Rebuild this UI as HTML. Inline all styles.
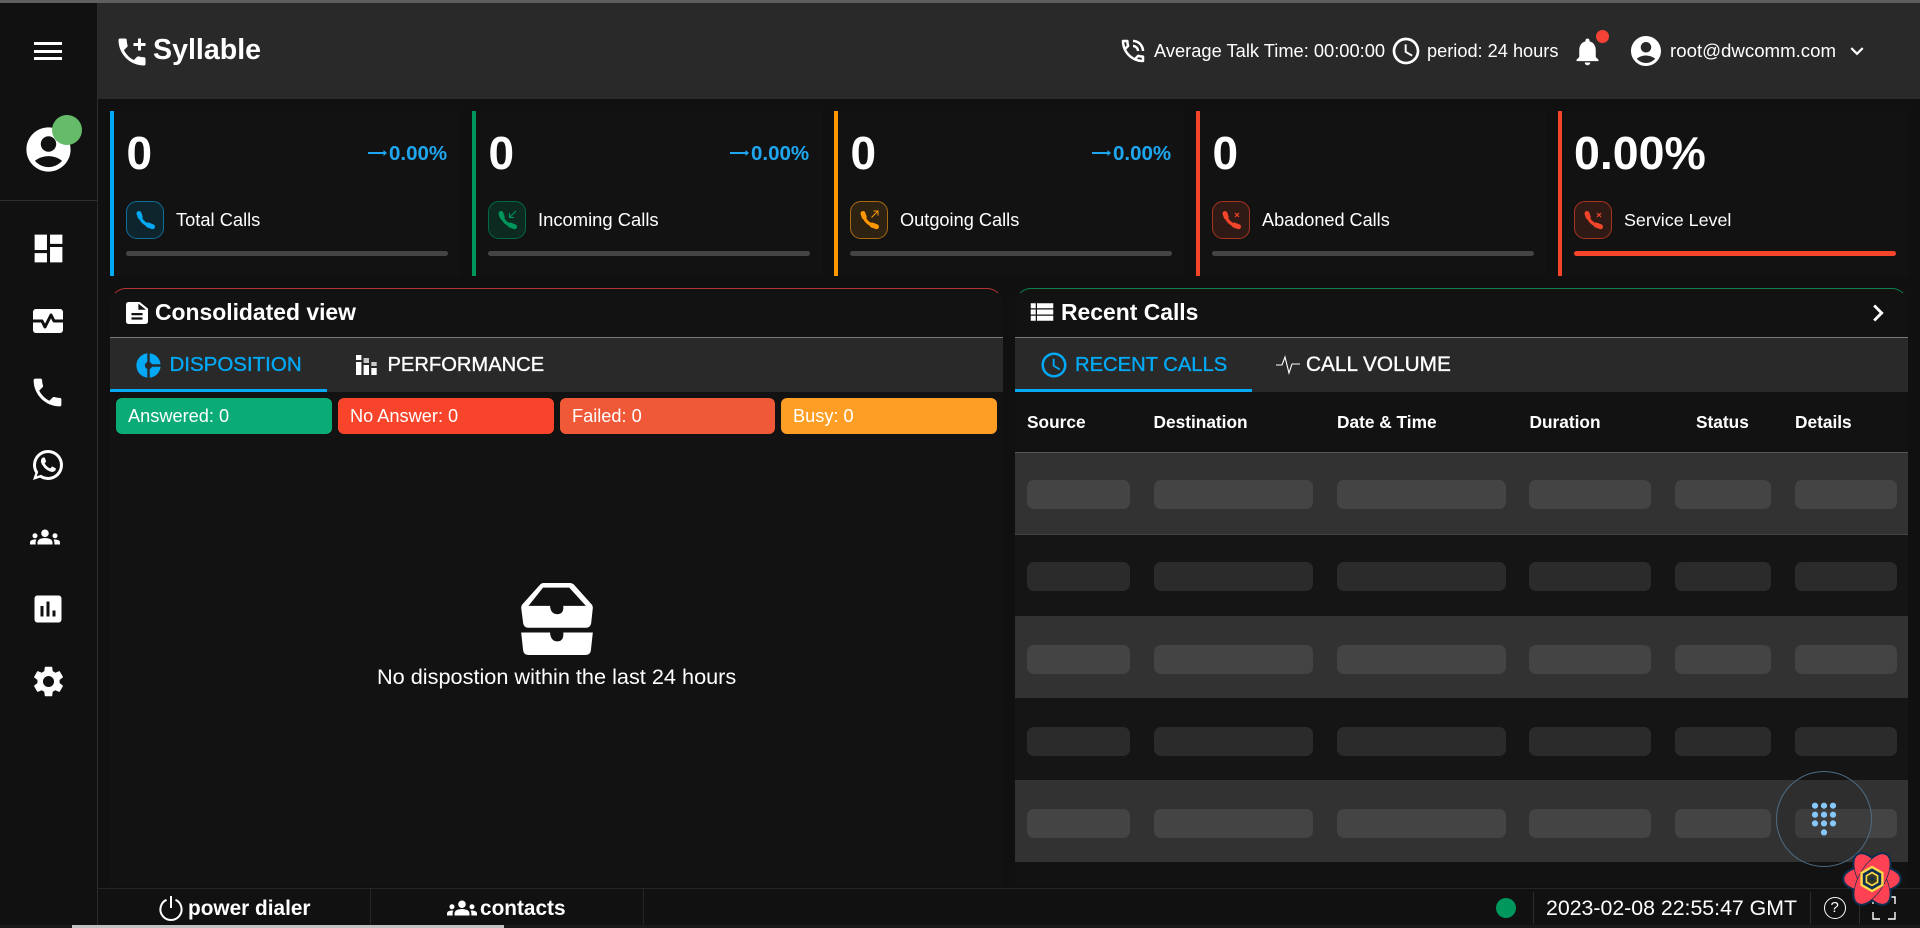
<!DOCTYPE html>
<html lang="en">
<head>
<meta charset="utf-8">
<title>Syllable</title>
<style>
html,body{margin:0;padding:0;width:1920px;height:928px;overflow:hidden;background:#111;}
body{position:relative;font-family:"Liberation Sans",Arial,sans-serif;color:#fff;}
.a{position:absolute;display:block;}
.t{position:absolute;white-space:nowrap;display:block;}
.m{-webkit-text-stroke:.35px currentColor;}
svg{position:absolute;display:block;overflow:visible;}
.w{fill:#fff;}
.b{font-weight:700;}
.card{position:absolute;top:111px;width:350px;height:165px;background:#121212;}
.skel{position:absolute;height:29px;border-radius:7px;}
.row{position:absolute;left:1015px;width:893px;height:82px;}
.chip{position:absolute;top:398px;height:36px;border-radius:6px;line-height:36px;font-size:18.2px;padding-left:12px;box-sizing:border-box;}
.ib{position:absolute;top:201px;width:38px;height:38px;border-radius:11px;box-sizing:border-box;border:1px solid;}
.h1{fill:none;stroke-width:3.2;}
.h2{fill:none;stroke-width:5;stroke-linecap:round;}
</style>
</head>
<body>
<div class="a" style="left:0;top:0;width:1920px;height:3px;background:#5e5e5e"></div>

<!-- main bg -->
<div class="a" style="left:98px;top:99px;width:1822px;height:790px;background:#101010"></div>

<!-- sidebar -->
<div class="a" style="left:0;top:3px;width:97px;height:925px;background:#111"></div>
<div class="a" style="left:97px;top:3px;width:1px;height:923px;background:#2b2b2b"></div>
<div class="a" style="left:34px;top:42px;width:28px;height:3px;background:#fff"></div>
<div class="a" style="left:34px;top:49.5px;width:28px;height:3px;background:#fff"></div>
<div class="a" style="left:34px;top:57px;width:28px;height:3px;background:#fff"></div>
<svg style="left:22px;top:123px" width="53" height="53" viewBox="0 0 24 24"><path class="w" d="M12 2C6.48 2 2 6.48 2 12s4.48 10 10 10 10-4.48 10-10S17.52 2 12 2zm0 4c1.93 0 3.5 1.57 3.5 3.5S13.93 13 12 13s-3.500-1.570-3.500-3.500S10.070 6 12 6zm0 14c-2.030 0-4.430-.82-6.140-2.880C7.550 15.800 9.680 15 12 15s4.450.8 6.140 2.120C16.430 19.180 14.030 20 12 20z"/></svg>
<div class="a" style="left:52px;top:115px;width:30px;height:30px;border-radius:50%;background:#66bb6a"></div>
<div class="a" style="left:0;top:200px;width:97px;height:1px;background:#2e2e2e"></div>
<svg style="left:29.500px;top:230px" width="37" height="37" viewBox="0 0 24 24"><path class="w" d="M3 13h8V3H3v10zm0 8h8v-6H3v6zm10 0h8V11h-8v10zm0-18v6h8V3h-8z"/></svg>
<svg style="left:30px;top:303px" width="36" height="36" viewBox="0 0 24 24"><path class="w" d="M20 4H4c-1.100 0-2 .9-2 2v5h6c.38 0 .72.21.89.55L10 13.760l3.110-6.210c.34-.68 1.450-.68 1.790 0L16.620 11H22V6c0-1.100-.9-2-2-2z"/><path class="w" d="M14 10.240l-3.110 6.210c-.17.34-.51.55-.89.55s-.72-.21-.89-.55L7.380 13H2v5c0 1.100.9 2 2 2h16c1.100 0 2-.9 2-2v-5h-6c-.38 0-.72-.21-.89-.55L14 10.240z"/></svg>
<svg style="left:29px;top:374px" width="37" height="37" viewBox="0 0 24 24"><path class="w" d="M6.620 10.790c1.440 2.830 3.760 5.140 6.590 6.590l2.200-2.200c.27-.27.67-.36 1.020-.24 1.120.37 2.330.57 3.570.57.55 0 1 .45 1 1V20c0 .55-.45 1-1 1-9.390 0-17-7.610-17-17 0-.55.45-1 1-1h3.500c.55 0 1 .45 1 1 0 1.250.2 2.450.57 3.570.11.35.03.74-.25 1.020l-2.200 2.200z"/></svg>
<svg style="left:30px;top:447px" width="36" height="36" viewBox="0 0 24 24"><path class="w" d="M16.750 13.960c.25.13.41.2.46.3.06.11.04.61-.21 1.180-.2.56-1.240 1.100-1.700 1.120-.46.02-.47.36-2.960-.73-2.490-1.090-3.990-3.750-4.110-3.920-.12-.17-.96-1.380-.92-2.610.05-1.220.69-1.800.95-2.040.24-.26.51-.29.68-.26h.47c.15 0 .36-.06.55.45l.69 1.870c.06.13.1.28.01.44l-.27.41-.39.42c-.12.12-.26.25-.12.5.12.26.62 1.090 1.320 1.780.91.88 1.710 1.170 1.950 1.300.24.14.39.12.54-.04l.81-.94c.19-.25.35-.19.58-.11l1.670.88M12 2a10 10 0 0 1 10 10 10 10 0 0 1-10 10c-1.970 0-3.800-.57-5.350-1.550L2 22l1.550-4.650A9.969 9.969 0 0 1 2 12 10 10 0 0 1 12 2m0 2a8 8 0 0 0-8 8c0 1.720.54 3.310 1.460 4.610L4.500 19.500l2.890-.96A7.950 7.950 0 0 0 12 20a8 8 0 0 0 8-8 8 8 0 0 0-8-8z"/></svg>
<svg style="left:30px;top:522px" width="30" height="30" viewBox="0 0 24 24"><path class="w" d="M12 12.750c1.630 0 3.070.39 4.240.9 1.080.48 1.760 1.560 1.760 2.730V18H6v-1.610c0-1.180.68-2.260 1.760-2.730 1.170-.52 2.610-.91 4.240-.91zM4 13c1.100 0 2-.9 2-2s-.9-2-2-2-2 .9-2 2 .9 2 2 2zm1.130 1.100c-.37-.06-.74-.1-1.130-.1-.99 0-1.930.21-2.780.58C.48 14.900 0 15.620 0 16.430V18h4.500v-1.610c0-.83.23-1.610.63-2.290zM20 13c1.100 0 2-.9 2-2s-.9-2-2-2-2 .9-2 2 .9 2 2 2zm4 3.430c0-.81-.48-1.530-1.220-1.850-.85-.37-1.790-.58-2.780-.58-.39 0-.76.04-1.130.1.4.68.63 1.460.63 2.290V18H24v-1.570zM12 6c1.660 0 3 1.340 3 3s-1.340 3-3 3-3-1.340-3-3 1.340-3 3-3z"/></svg>
<svg style="left:29.500px;top:591px" width="36" height="36" viewBox="0 0 24 24"><path class="w" d="M19 3H5c-1.100 0-2 .9-2 2v14c0 1.100.9 2 2 2h14c1.100 0 2-.9 2-2V5c0-1.100-.9-2-2-2zM9 17H7v-7h2v7zm4 0h-2V7h2v10zm4 0h-2v-4h2v4z"/></svg>
<svg style="left:29.500px;top:662.500px" width="37" height="37" viewBox="0 0 24 24"><path class="w" d="M19.140 12.940c.04-.3.06-.61.06-.94 0-.32-.02-.64-.07-.94l2.030-1.580c.18-.14.23-.41.12-.61l-1.920-3.320c-.12-.22-.37-.29-.59-.22l-2.390.96c-.5-.38-1.030-.7-1.620-.94l-.36-2.540c-.04-.24-.24-.41-.48-.41h-3.840c-.24 0-.43.17-.47.41l-.36 2.540c-.59.24-1.130.57-1.620.94l-2.390-.96c-.22-.08-.47 0-.59.22L2.740 8.870c-.12.21-.08.47.12.61l2.030 1.580c-.05.3-.09.63-.09.94s.02.64.07.94l-2.030 1.580c-.18.14-.23.41-.12.61l1.920 3.320c.12.22.37.29.59.22l2.390-.96c.5.38 1.030.7 1.620.94l.36 2.540c.05.24.24.41.48.41h3.840c.24 0 .44-.17.47-.41l.36-2.540c.59-.24 1.130-.56 1.620-.94l2.390.96c.22.08.47 0 .59-.22l1.920-3.320c.12-.22.07-.47-.12-.61l-2.010-1.580zM12 15.600c-1.980 0-3.600-1.620-3.600-3.600s1.620-3.600 3.600-3.600 3.600 1.620 3.600 3.600-1.620 3.600-3.600 3.600z"/></svg>

<!-- header -->
<div class="a" style="left:98px;top:3px;width:1822px;height:96px;background:#292929"></div>
<svg style="left:114px;top:34px" width="36" height="36" viewBox="0 0 24 24"><path class="w" d="M20 15.500c-1.250 0-2.450-.2-3.570-.57-.35-.11-.74-.03-1.020.24l-2.200 2.200c-2.830-1.440-5.150-3.750-6.590-6.590l2.200-2.210c.28-.26.36-.65.25-1C8.700 6.450 8.500 5.250 8.500 4c0-.55-.45-1-1-1H4c-.55 0-1 .45-1 1 0 9.390 7.610 17 17 17 .55 0 1-.45 1-1v-3.500c0-.55-.45-1-1-1zM21 6h-3V3h-2v3h-3v2h3v3h2V8h3z"/></svg>
<span class="t b" style="left:153px;top:31px;line-height:38px;font-size:28.600px">Syllable</span>

<svg style="left:1118px;top:36px" width="30" height="30" viewBox="0 0 24 24"><path class="w" d="M15 12h2c0-2.760-2.240-5-5-5v2c1.660 0 3 1.340 3 3zm4 0h2c0-4.970-4.030-9-9-9v2c3.870 0 7 3.130 7 7zm1 3.500c-1.250 0-2.450-.2-3.570-.57-.1-.03-.21-.05-.31-.05-.26 0-.51.1-.71.29l-2.200 2.200c-2.830-1.450-5.150-3.760-6.590-6.590l2.200-2.210c.28-.26.36-.65.25-1C8.700 6.450 8.500 5.250 8.500 4c0-.55-.45-1-1-1H4c-.55 0-1 .45-1 1 0 9.390 7.610 17 17 17 .55 0 1-.45 1-1v-3.500c0-.55-.45-1-1-1zM5.030 5h1.500c.07.88.22 1.750.45 2.580l-1.200 1.210c-.4-1.210-.66-2.470-.75-3.790zM19 18.970c-1.320-.09-2.600-.35-3.800-.76l1.200-1.200c.85.24 1.720.39 2.600.45v1.510z"/></svg>
<span class="t" style="left:1154px;top:40px;line-height:22px;font-size:18.300px">Average Talk Time: 00:00:00</span>
<svg style="left:1390px;top:35px" width="32" height="32" viewBox="0 0 24 24"><path class="w" d="M11.990 2C6.470 2 2 6.480 2 12s4.470 10 9.990 10C17.520 22 22 17.520 22 12S17.520 2 11.990 2zM12 20c-4.420 0-8-3.580-8-8s3.580-8 8-8 8 3.580 8 8-3.580 8-8 8zm.5-13H11v6l5.250 3.150.75-1.230-4.500-2.670z"/></svg>
<span class="t" style="left:1427px;top:40px;line-height:22px;font-size:18.200px">period: 24 hours</span>
<svg style="left:1571px;top:35px" width="33" height="33" viewBox="0 0 24 24"><path class="w" d="M12 22c1.100 0 2-.9 2-2h-4c0 1.100.89 2 2 2zm6-6v-5c0-3.070-1.640-5.640-4.500-6.320V4c0-.83-.67-1.500-1.500-1.500s-1.500.67-1.500 1.500v.68C7.630 5.360 6 7.920 6 11v5l-2 2v1h16v-1l-2-2z"/></svg>
<div class="a" style="left:1595.500px;top:29.500px;width:13px;height:13px;border-radius:50%;background:#f44336"></div>
<svg style="left:1628px;top:33px" width="36" height="36" viewBox="0 0 24 24"><path class="w" d="M12 2C6.480 2 2 6.480 2 12s4.480 10 10 10 10-4.480 10-10S17.520 2 12 2zm0 4c1.930 0 3.500 1.570 3.500 3.500S13.930 13 12 13s-3.500-1.570-3.500-3.500S10.070 6 12 6zm0 14c-2.030 0-4.430-.82-6.140-2.880C7.550 15.800 9.680 15 12 15s4.450.8 6.140 2.120C16.430 19.180 14.030 20 12 20z"/></svg>
<span class="t" style="left:1670px;top:40px;line-height:22px;font-size:18.650px">root@dwcomm.com</span>
<svg style="left:1844px;top:38px" width="26" height="26" viewBox="0 0 24 24"><path class="w" d="M7.410 8.590 12 13.170l4.590-4.580L18 10l-6 6-6-6z"/></svg>

<!-- stat cards -->
<div class="card" style="left:110px"></div><div class="card" style="left:472px"></div><div class="card" style="left:834px"></div><div class="card" style="left:1196px"></div><div class="card" style="left:1558px"></div>
<div class="a" style="left:110px;top:111px;width:4px;height:165px;background:#03a9f4"></div>
<div class="a" style="left:472px;top:111px;width:4px;height:165px;background:#00975c"></div>
<div class="a" style="left:834px;top:111px;width:4px;height:165px;background:#ff9800"></div>
<div class="a" style="left:1196px;top:111px;width:4px;height:165px;background:#f4442a"></div>
<div class="a" style="left:1558px;top:111px;width:4px;height:165px;background:#f4442a"></div>

<span class="t b" style="left:126.500px;top:126px;line-height:54px;font-size:46px">0</span>
<span class="t b" style="left:488.500px;top:126px;line-height:54px;font-size:46px">0</span>
<span class="t b" style="left:850.500px;top:126px;line-height:54px;font-size:46px">0</span>
<span class="t b" style="left:1212.500px;top:126px;line-height:54px;font-size:46px">0</span>
<span class="t b" style="left:1574px;top:126px;line-height:54px;font-size:46.500px">0.00%</span>

<!-- percents -->
<svg style="left:368px;top:147px" width="20" height="12" viewBox="0 0 20 12"><path d="M0 6h17" stroke="#1ea7f0" stroke-width="2"/><path d="M15.500 3l3.500 3-3.500 3z" fill="#1ea7f0"/></svg>
<span class="t b" style="left:389px;top:140.500px;line-height:26px;font-size:20.500px;color:#1ea7f0">0.00%</span>
<svg style="left:730px;top:147px" width="20" height="12" viewBox="0 0 20 12"><path d="M0 6h17" stroke="#1ea7f0" stroke-width="2"/><path d="M15.500 3l3.500 3-3.500 3z" fill="#1ea7f0"/></svg>
<span class="t b" style="left:751px;top:140.500px;line-height:26px;font-size:20.500px;color:#1ea7f0">0.00%</span>
<svg style="left:1092px;top:147px" width="20" height="12" viewBox="0 0 20 12"><path d="M0 6h17" stroke="#1ea7f0" stroke-width="2"/><path d="M15.500 3l3.500 3-3.500 3z" fill="#1ea7f0"/></svg>
<span class="t b" style="left:1113px;top:140.500px;line-height:26px;font-size:20.500px;color:#1ea7f0">0.00%</span>

<!-- stat icon boxes -->
<div class="ib" style="left:126px;border-color:#0f6f99;background:#0f252e"></div>
<svg style="left:133px;top:208px" width="24" height="24" viewBox="0 0 24 24" stroke="#03a9f4"><path class="h1" d="M6.500 6.500C7 12 12 17 17.500 17.500"/><path class="h2" d="M6 5.500 7.200 9M15 17l4.500 1.700"/></svg>
<div class="ib" style="left:488px;border-color:#006b45;background:#0c2a20"></div>
<svg style="left:495px;top:208px" width="24" height="24" viewBox="0 0 24 24" stroke="#00975c"><path class="h1" d="M6.500 6.500C7 12 12 17 17.500 17.500"/><path class="h2" d="M6 5.500 7.200 9M15 17l4.500 1.700"/><path d="M21 3 14.500 9.500M14.500 5v4.500H19" fill="none" stroke-width="1"/></svg>
<div class="ib" style="left:850px;border-color:#a86a10;background:#2e2213"></div>
<svg style="left:857px;top:208px" width="24" height="24" viewBox="0 0 24 24" stroke="#ff9800"><path class="h1" d="M6.500 6.500C7 12 12 17 17.500 17.500"/><path class="h2" d="M6 5.500 7.200 9M15 17l4.500 1.700"/><path d="M14.500 9.500 21 3M16.500 3H21V7.500" fill="none" stroke-width="1"/></svg>
<div class="ib" style="left:1212px;border-color:#a53320;background:#301a16"></div>
<svg style="left:1219px;top:208px" width="24" height="24" viewBox="0 0 24 24" stroke="#f4442a"><path class="h1" d="M6.500 6.500C7 12 12 17 17.500 17.500"/><path class="h2" d="M6 5.500 7.200 9M15 17l4.500 1.700"/><path d="M16 5l4 4M20 5l-4 4" fill="none" stroke-width="1.200"/></svg>
<div class="ib" style="left:1574px;border-color:#a53320;background:#301a16"></div>
<svg style="left:1581px;top:208px" width="24" height="24" viewBox="0 0 24 24" stroke="#f4442a"><path class="h1" d="M6.500 6.500C7 12 12 17 17.500 17.500"/><path class="h2" d="M6 5.500 7.200 9M15 17l4.500 1.700"/><path d="M16 5l4 4M20 5l-4 4" fill="none" stroke-width="1.200"/></svg>

<span class="t" style="left:176px;top:209px;line-height:22px;font-size:18.300px">Total Calls</span>
<span class="t" style="left:538px;top:209px;line-height:22px;font-size:18.400px">Incoming Calls</span>
<span class="t" style="left:900px;top:209px;line-height:22px;font-size:18.200px">Outgoing Calls</span>
<span class="t" style="left:1262px;top:209px;line-height:22px;font-size:18.100px">Abadoned Calls</span>
<span class="t" style="left:1624px;top:209px;line-height:22px;font-size:17.900px">Service Level</span>

<div class="a" style="left:126px;top:251px;width:322px;height:5px;border-radius:3px;background:#444"></div>
<div class="a" style="left:488px;top:251px;width:322px;height:5px;border-radius:3px;background:#444"></div>
<div class="a" style="left:850px;top:251px;width:322px;height:5px;border-radius:3px;background:#444"></div>
<div class="a" style="left:1212px;top:251px;width:322px;height:5px;border-radius:3px;background:#444"></div>
<div class="a" style="left:1574px;top:251px;width:322px;height:5px;border-radius:3px;background:#f4442a"></div>

<!-- consolidated panel -->
<div class="a" style="left:110px;top:288px;width:893px;height:598px;background:#121212;box-sizing:border-box;border:1px solid transparent;border-top-color:#b53535;border-radius:16px 16px 0 0;border-bottom:0"></div>
<svg style="left:126px;top:302px" width="22" height="22" viewBox="4 2 16 20" preserveAspectRatio="none"><path class="w" d="M14 2H6c-1.100 0-1.990.9-1.990 2L4 20c0 1.100.89 2 1.990 2H18c1.100 0 2-.9 2-2V8l-6-6zm2 16H8v-2h8v2zm0-4H8v-2h8v2zm-3-5V3.500L18.500 9H13z"/></svg>
<span class="t b" style="left:155px;top:298px;line-height:29px;font-size:22.900px">Consolidated view</span>
<div class="a" style="left:110px;top:337px;width:893px;height:1px;background:#777"></div>
<div class="a" style="left:110px;top:338px;width:893px;height:54px;background:#292929"></div>
<div class="a" style="left:110px;top:389px;width:217px;height:3px;background:#03a9f4"></div>
<svg style="left:134px;top:351px" width="29" height="29" viewBox="0 0 24 24"><path fill="#03a9f4" d="M11 9.160V2c-5 .5-9 4.790-9 10s4 9.500 9 10v-7.160c-1-.41-2-1.520-2-2.840s1-2.430 2-2.840zM14.860 11H22c-.48-4.750-4-8.530-9-9v7.160c1 .3 1.520.98 1.860 1.840zM13 14.840V22c5-.47 8.520-4.250 9-9h-7.140c-.34.860-.86 1.540-1.860 1.840z"/></svg>
<span class="t m" style="left:169.500px;top:352px;line-height:26px;font-size:20.500px;color:#03a9f4">DISPOSITION</span>
<svg style="left:355.700px;top:355px" width="21" height="20" viewBox="0 0 21 20"><g class="w"><rect x="0" y="0" width="5.400" height="5"/><rect x="0" y="7" width="5.400" height="13"/><g opacity=".75"><rect x="7.600" y="3" width="5.400" height="5"/></g><rect x="7.600" y="10" width="5.400" height="10"/><g opacity=".75"><rect x="15.300" y="7" width="5.400" height="4"/></g><rect x="15.300" y="13" width="5.400" height="7"/></g></svg>
<span class="t m" style="left:387.500px;top:352px;line-height:26px;font-size:20.150px">PERFORMANCE</span>
<div class="chip" style="left:116px;width:216px;background:#0aab77">Answered: 0</div>
<div class="chip" style="left:338px;width:216px;background:#f8442a">No Answer: 0</div>
<div class="chip" style="left:560px;width:215px;background:#ef5937">Failed: 0</div>
<div class="chip" style="left:781px;width:216px;background:#fe9e25">Busy: 0</div>
<svg style="left:521px;top:583px" width="72" height="72" viewBox="123 68 216 217"><path class="w" fill-rule="evenodd" d="M190 68h80q8 0 14 7l50 56q5 5 5 12l-5 46q-2 14-16 14H145q-14 0-16-14l-6-46q0-7 5-12l50-56q6-7 12-7zM189 82l-44 55h65q2 25 22 25t18-25h68l-50-55z"/><path class="w" d="M123 217h87q2 27 22 27t18-27h89l-6 55q-2 13-16 13H145q-14 0-16-13z"/></svg>
<span class="t" style="left:377px;top:664px;line-height:26px;font-size:21.700px">No dispostion within the last 24 hours</span>

<!-- recent calls panel -->
<div class="a" style="left:1015px;top:288px;width:893px;height:598px;background:#121212;box-sizing:border-box;border:1px solid transparent;border-top-color:#0d8250;border-radius:16px 16px 0 0;border-bottom:0"></div>
<svg style="left:1027px;top:297px" width="30" height="30" viewBox="0 0 24 24"><path class="w" d="M3 14h4v-4H3v4zm0 5h4v-4H3v4zM3 9h4V5H3v4zm5 5h13v-4H8v4zm0 5h13v-4H8v4zM8 5v4h13V5H8z"/></svg>
<span class="t b" style="left:1061px;top:298px;line-height:29px;font-size:22.900px">Recent Calls</span>
<svg style="left:1861px;top:296px" width="34" height="34" viewBox="0 0 24 24"><path class="w" d="M10 6 8.590 7.410 13.170 12l-4.580 4.590L10 18l6-6z"/></svg>
<div class="a" style="left:1015px;top:337px;width:893px;height:1px;background:#777"></div>
<div class="a" style="left:1015px;top:338px;width:893px;height:54px;background:#292929"></div>
<div class="a" style="left:1015px;top:389px;width:237px;height:3px;background:#03a9f4"></div>
<svg style="left:1038.500px;top:350px" width="30" height="30" viewBox="0 0 24 24"><path fill="#03a9f4" d="M11.990 2C6.470 2 2 6.480 2 12s4.470 10 9.990 10C17.520 22 22 17.520 22 12S17.520 2 11.990 2zM12 20c-4.420 0-8-3.580-8-8s3.580-8 8-8 8 3.580 8 8-3.580 8-8 8zm.5-13H11v6l5.250 3.150.75-1.230-4.500-2.670z"/></svg>
<span class="t m" style="left:1075px;top:352px;line-height:26px;font-size:20.200px;color:#03a9f4">RECENT CALLS</span>
<svg style="left:1276px;top:355px" width="24" height="20" viewBox="0 0 24 20"><path d="M0 10h6l3-8 4 16 3-9h8" fill="none" stroke="#fff" stroke-width="1.100"/></svg>
<span class="t m" style="left:1306px;top:352px;line-height:26px;font-size:20.800px">CALL VOLUME</span>

<span class="t b" style="left:1027px;top:411px;line-height:22px;font-size:17.300px">Source</span>
<span class="t b" style="left:1153.500px;top:411px;line-height:22px;font-size:17.300px">Destination</span>
<span class="t b" style="left:1337px;top:411px;line-height:22px;font-size:17.300px">Date &amp; Time</span>
<span class="t b" style="left:1529.500px;top:411px;line-height:22px;font-size:17.300px">Duration</span>
<span class="t b" style="left:1696px;top:411px;line-height:22px;font-size:17.300px">Status</span>
<span class="t b" style="left:1795px;top:411px;line-height:22px;font-size:17.300px">Details</span>
<div class="a" style="left:1015px;top:452px;width:893px;height:1px;background:#555"></div>

<div class="row" style="top:453px;height:81px;background:#323232"></div>
<div class="row" style="top:534px;background:#151515;border-top:1px solid #444;box-sizing:border-box"></div>
<div class="row" style="top:616px;background:#323232"></div>
<div class="row" style="top:698px;background:#151515"></div>
<div class="row" style="top:780px;background:#323232"></div>

<div class="skel" style="left:1027px;top:480px;width:103px;background:#444"></div><div class="skel" style="left:1154px;top:480px;width:159px;background:#444"></div><div class="skel" style="left:1337px;top:480px;width:169px;background:#444"></div><div class="skel" style="left:1529px;top:480px;width:122px;background:#444"></div><div class="skel" style="left:1675px;top:480px;width:96px;background:#444"></div><div class="skel" style="left:1795px;top:480px;width:102px;background:#444"></div>
<div class="skel" style="left:1027px;top:562px;width:103px;background:#2b2b2b"></div><div class="skel" style="left:1154px;top:562px;width:159px;background:#2b2b2b"></div><div class="skel" style="left:1337px;top:562px;width:169px;background:#2b2b2b"></div><div class="skel" style="left:1529px;top:562px;width:122px;background:#2b2b2b"></div><div class="skel" style="left:1675px;top:562px;width:96px;background:#2b2b2b"></div><div class="skel" style="left:1795px;top:562px;width:102px;background:#2b2b2b"></div>
<div class="skel" style="left:1027px;top:645px;width:103px;background:#444"></div><div class="skel" style="left:1154px;top:645px;width:159px;background:#444"></div><div class="skel" style="left:1337px;top:645px;width:169px;background:#444"></div><div class="skel" style="left:1529px;top:645px;width:122px;background:#444"></div><div class="skel" style="left:1675px;top:645px;width:96px;background:#444"></div><div class="skel" style="left:1795px;top:645px;width:102px;background:#444"></div>
<div class="skel" style="left:1027px;top:727px;width:103px;background:#2b2b2b"></div><div class="skel" style="left:1154px;top:727px;width:159px;background:#2b2b2b"></div><div class="skel" style="left:1337px;top:727px;width:169px;background:#2b2b2b"></div><div class="skel" style="left:1529px;top:727px;width:122px;background:#2b2b2b"></div><div class="skel" style="left:1675px;top:727px;width:96px;background:#2b2b2b"></div><div class="skel" style="left:1795px;top:727px;width:102px;background:#2b2b2b"></div>
<div class="skel" style="left:1027px;top:809px;width:103px;background:#444"></div><div class="skel" style="left:1154px;top:809px;width:159px;background:#444"></div><div class="skel" style="left:1337px;top:809px;width:169px;background:#444"></div><div class="skel" style="left:1529px;top:809px;width:122px;background:#444"></div><div class="skel" style="left:1675px;top:809px;width:96px;background:#444"></div><div class="skel" style="left:1795px;top:809px;width:102px;background:#444"></div>

<!-- bottom bar -->
<div class="a" style="left:98px;top:888px;width:1822px;height:37px;background:#111;border-top:1px solid #252525;box-sizing:border-box"></div>
<div class="a" style="left:370px;top:888px;width:1px;height:37px;background:#252525"></div>
<div class="a" style="left:643px;top:888px;width:1px;height:37px;background:#252525"></div>
<svg style="left:159px;top:896px" width="24" height="24" viewBox="0 0 24 24"><path d="M12 0v12M7.500 3.800A10.600 10.600 0 1 0 16.500 3.800" fill="none" stroke="#fff" stroke-width="2"/></svg>
<span class="t b" style="left:188px;top:896px;line-height:26px;font-size:20.800px">power dialer</span>
<svg style="left:447px;top:893px" width="30" height="30" viewBox="0 0 24 24"><path class="w" d="M12 12.750c1.630 0 3.070.39 4.240.9 1.080.48 1.760 1.560 1.760 2.730V18H6v-1.610c0-1.180.68-2.260 1.760-2.730 1.170-.52 2.610-.91 4.240-.91zM4 13c1.100 0 2-.9 2-2s-.9-2-2-2-2 .9-2 2 .9 2 2 2zm1.130 1.100c-.37-.06-.74-.1-1.130-.1-.99 0-1.930.21-2.780.58C.48 14.900 0 15.620 0 16.430V18h4.500v-1.610c0-.83.23-1.610.63-2.290zM20 13c1.100 0 2-.9 2-2s-.9-2-2-2-2 .9-2 2 .9 2 2 2zm4 3.430c0-.81-.48-1.530-1.220-1.850-.85-.37-1.790-.58-2.780-.58-.39 0-.76.04-1.130.1.4.68.63 1.460.63 2.290V18H24v-1.570zM12 6c1.660 0 3 1.340 3 3s-1.340 3-3 3-3-1.340-3-3 1.340-3 3-3z"/></svg>
<span class="t b" style="left:480px;top:896px;line-height:26px;font-size:20.800px">contacts</span>

<div class="a" style="left:1496px;top:898px;width:20px;height:20px;border-radius:50%;background:#00975c"></div>
<div class="a" style="left:1533px;top:892px;width:1px;height:32px;background:#2e2e2e"></div>
<span class="t" style="left:1546px;top:895px;line-height:26px;font-size:21.300px">2023-02-08 22:55:47 GMT</span>
<div class="a" style="left:1810px;top:892px;width:1px;height:32px;background:#2e2e2e"></div>
<div class="a" style="left:1823.500px;top:896.500px;width:20.400px;height:20.400px;border:1.600px solid #fff;border-radius:50%;text-align:center;line-height:20.400px;font-size:15px">?</div>
<div class="a" style="left:1859px;top:892px;width:1px;height:32px;background:#2e2e2e"></div>
<svg style="left:1872px;top:896px" width="24" height="24" viewBox="0 0 24 24"><path d="M1 8V1h7M16 1h7v7M1 16v7h7M16 23h7v-7" fill="none" stroke="#fff" stroke-width="1.400"/></svg>

<!-- scrollbar -->
<div class="a" style="left:0;top:925px;width:1920px;height:3px;background:#1a1a1a"></div>
<div class="a" style="left:72px;top:925px;width:432px;height:3px;background:#c2c2c2"></div>

<!-- floating dial button -->
<div class="a" style="left:1775.500px;top:771px;width:96px;height:96px;border-radius:50%;border:1px solid #4f6c82;box-sizing:border-box;background:rgba(30,30,30,.15)"></div>
<svg style="left:1808px;top:800px" width="32" height="38" viewBox="0 0 32 38"><g fill="#86c8fa"><circle cx="7" cy="5.700" r="3.100"/><circle cx="16" cy="5.700" r="3.100"/><circle cx="25" cy="5.700" r="3.100"/><circle cx="7" cy="14.700" r="3.100"/><circle cx="16" cy="14.700" r="3.100"/><circle cx="25" cy="14.700" r="3.100"/><circle cx="7" cy="23.400" r="3.100"/><circle cx="16" cy="23.400" r="3.100"/><circle cx="25" cy="23.400" r="3.100"/><circle cx="16" cy="32.400" r="3.100"/></g></svg>

<!-- logo -->
<svg style="left:1842.300px;top:850px" width="60" height="58" viewBox="-30 -29 60 58">
<g fill="#0b2f4e" stroke="#0b2f4e" stroke-width="3.500">
<ellipse rx="28" ry="13"/>
<ellipse rx="28" ry="13" transform="rotate(60)"/>
<ellipse rx="28" ry="13" transform="rotate(120)"/>
</g>
<g fill="#ff4154" stroke="#0b2f4e" stroke-width=".7">
<ellipse rx="28" ry="13"/>
<ellipse rx="28" ry="13" transform="rotate(60)"/>
<ellipse rx="28" ry="13" transform="rotate(120)"/>
</g>
<polygon points="0,-12 10.400,-6 10.400,6 0,12 -10.400,6 -10.400,-6" fill="#0b2f4e" stroke="#ffd94c" stroke-width="2.400"/>
<polygon points="0,-6.500 5.600,-3.250 5.600,3.250 0,6.500 -5.600,3.250 -5.600,-3.250" fill="#3a3a20" stroke="#ffd94c" stroke-width="1.600"/>
<circle r="1.800" fill="#0b2f4e"/>
</svg>
</body>
</html>
